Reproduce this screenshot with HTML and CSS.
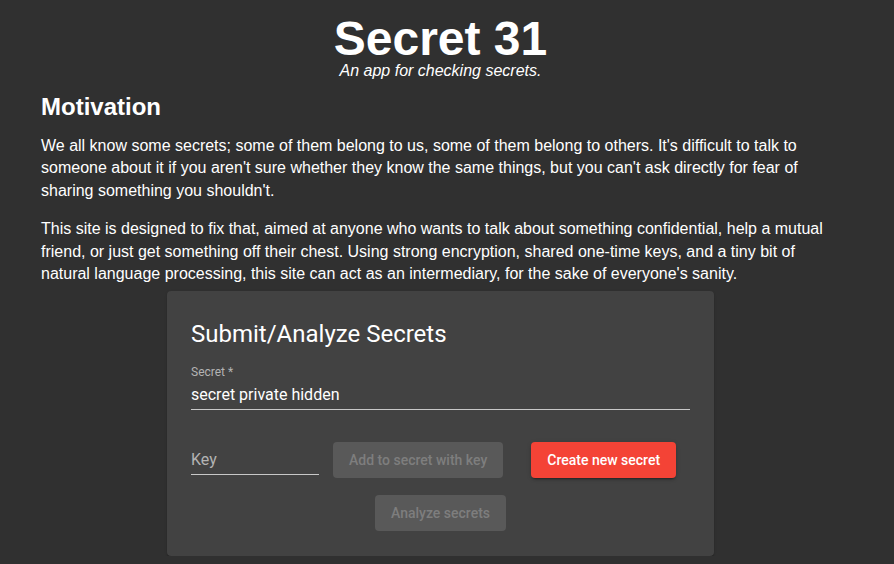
FILE: index.html
```html
<!DOCTYPE html>
<html lang="en">
<head>
<meta charset="utf-8">
<title>Secret 31</title>
<link rel="stylesheet" href="styles.css">
</head>
<body>
<header class="masthead">
  <h1 class="site-title">Secret 31</h1>
  <p class="tagline">An app for checking secrets.</p>
</header>
<main class="content">
  <h2 class="section-title">Motivation</h2>
  <p class="para">We all know some secrets; some of them belong to us, some of them belong to others. It's difficult to talk to someone about it if you aren't sure whether they know the same things, but you can't ask directly for fear of sharing something you shouldn't.</p>
  <p class="para">This site is designed to fix that, aimed at anyone who wants to talk about something confidential, help a mutual friend, or just get something off their chest. Using strong encryption, shared one-time keys, and a tiny bit of natural language processing, this site can act as an intermediary, for the sake of everyone's sanity.</p>
  <section class="card">
    <h3 class="card-title">Submit/Analyze Secrets</h3>
    <div class="field">
      <label class="field-label">Secret *</label>
      <div class="field-input">secret private hidden</div>
    </div>
    <div class="action-row">
      <div class="key-input">Key</div>
      <button class="btn btn-disabled btn-add">Add to secret with key</button>
      <button class="btn btn-primary btn-create">Create new secret</button>
    </div>
    <div class="analyze-row">
      <button class="btn btn-disabled">Analyze secrets</button>
    </div>
  </section>
</main>
</body>
</html>
```

FILE: styles.css
```css
html, body {
  margin: 0;
  padding: 0;
  background: #303030;
  color: #ffffff;
  font-family: "Liberation Sans", Arial, sans-serif;
}

body {
  padding-right: 13px;
}

.masthead {
  text-align: center;
  padding-top: 18px;
}

.site-title {
  margin: 0;
  font-size: 48px;
  line-height: 42px;
  font-weight: bold;
}

.tagline {
  margin: 2px 0 0;
  font-size: 16px;
  line-height: 18px;
  font-style: italic;
}

.content {
  padding: 0 41px;
}

.section-title {
  margin: 13px 0 0;
  font-size: 24px;
  line-height: 28px;
  font-weight: bold;
}

.para {
  margin: 14px 0 16px;
  font-size: 16px;
  line-height: 22.4px;
}

.para + .para {
  margin-top: 16px;
}

.card {
  box-sizing: border-box;
  width: 547px;
  margin: -10.4px auto 0;
  padding: 27px 24px 25px;
  background: #424242;
  border-radius: 4px;
  box-shadow: 0 2px 1px -1px rgba(0,0,0,.2), 0 1px 1px 0 rgba(0,0,0,.14), 0 1px 3px 0 rgba(0,0,0,.12);
  font-family: Roboto, "Noto Sans", sans-serif;
}

.card-title {
  margin: 0;
  font-size: 24px;
  line-height: 32px;
  font-weight: 400;
}

.field {
  margin-top: 15px;
}

.field-label {
  display: block;
  font-size: 12px;
  line-height: 14px;
  color: #b3b3b3;
}

.field-input {
  padding: 6px 0 4px;
  font-size: 16px;
  line-height: 20px;
  border-bottom: 1px solid #c8c8c8;
}

.action-row {
  display: flex;
  align-items: flex-start;
  margin-top: 32px;
}

.key-input {
  width: 128px;
  padding: 8px 0 4px;
  font-size: 16px;
  line-height: 20px;
  color: #b3b3b3;
  border-bottom: 1px solid #c8c8c8;
}

.btn {
  height: 36px;
  padding: 0 16px;
  border: none;
  border-radius: 4px;
  font-family: Roboto, "Noto Sans", sans-serif;
  font-size: 14px;
  font-weight: 500;
  line-height: 36px;
}

.btn-disabled {
  background: #595959;
  color: #7e7e7e;
}

.btn-primary {
  background: #f44336;
  color: #ffffff;
  box-shadow: 0 3px 1px -2px rgba(0,0,0,.2), 0 2px 2px 0 rgba(0,0,0,.14), 0 1px 5px 0 rgba(0,0,0,.12);
}

.btn-add {
  margin-left: 14px;
}

.btn-create {
  margin-left: 28px;
}

.analyze-row {
  display: flex;
  justify-content: center;
  margin-top: 17px;
}
```
